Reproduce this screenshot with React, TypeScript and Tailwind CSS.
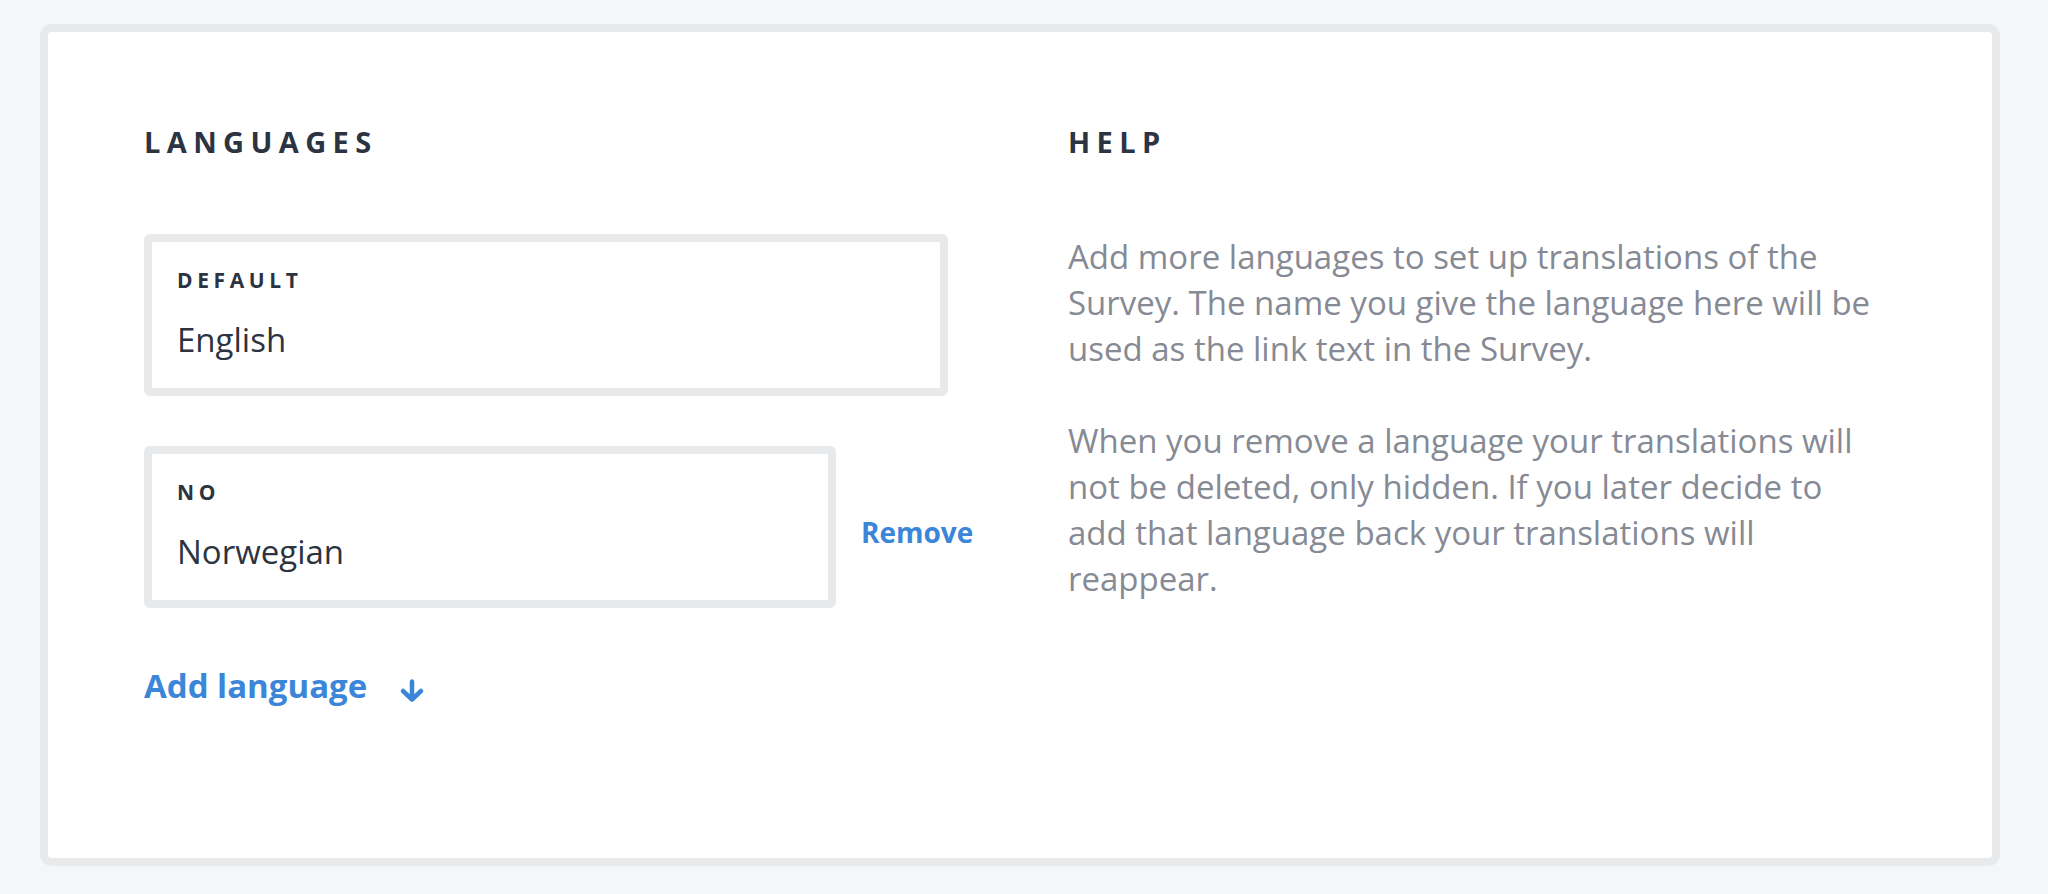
interface LanguageBoxProps {
	code: string
	name: string
	width: string
}

const LanguageBox = ({ code, name, width }: LanguageBoxProps) => {
	return (
		<div
			className={`${width} rounded-[6px] border-8 border-[#e8e9eb] bg-white px-[25px] pt-[25px] pb-[28px]`}
		>
			<div className="text-[21px] leading-[26px] font-bold tracking-[0.22em] text-[#2c3341]">
				{code}
			</div>
			<div className="mt-[26px] text-[33px] leading-[41px] text-[#2c3341]">
				{name}
			</div>
		</div>
	)
}

const ArrowDownIcon = () => (
	<svg width="28" height="24" viewBox="0 0 28 24" fill="none" className="ml-[31px] mt-[10px]">
		<path
			d="M14 2.5V20M5 12L14 20.5L23 12"
			stroke="currentColor"
			strokeWidth="4.5"
			strokeLinecap="round"
			strokeLinejoin="round"
		/>
	</svg>
)

export default function App() {
	return (
		<div className="min-h-[894px] bg-[#f5f6f8] pt-[24px] pr-[48px] pb-[28px] pl-[40px] font-['Open_Sans',sans-serif]">
			<div className="h-[842px] rounded-[12px] border-8 border-[#e8e9eb] bg-white pt-[92px] pl-[96px]">
				<div className="flex">
					{/* Languages column */}
					<div className="w-[924px] shrink-0">
						<h2 className="text-[29px] leading-[36px] font-bold tracking-[0.22em] text-[#2c3341]">
							LANGUAGES
						</h2>

						<div className="mt-[74px]">
							<LanguageBox code="DEFAULT" name="English" width="w-[804px]" />
						</div>

						<div className="mt-[50px] flex items-center">
							<LanguageBox code="NO" name="Norwegian" width="w-[692px]" />
							<button className="ml-[25px] mt-[10px] text-[28px] font-bold text-[#3b86d8]">
								Remove
							</button>
						</div>

						<button className="mt-[57px] flex items-center text-[33px] leading-[41px] font-bold text-[#3b86d8]">
							Add language
							<ArrowDownIcon />
						</button>
					</div>

					{/* Help column */}
					<div className="w-[812px]">
						<h2 className="text-[29px] leading-[36px] font-bold tracking-[0.22em] text-[#2c3341]">
							HELP
						</h2>
						<div className="mt-[74px] text-[33px] leading-[46px] text-[#868a94]">
							<p>
								Add more languages to set up translations of the Survey. The name you
								give the language here will be used as the link text in the Survey.
							</p>
							<p className="mt-[46px]">
								When you remove a language your translations will not be deleted, only
								hidden. If you later decide to add that language back your translations
								will reappear.
							</p>
						</div>
					</div>
				</div>
			</div>
		</div>
	)
}
